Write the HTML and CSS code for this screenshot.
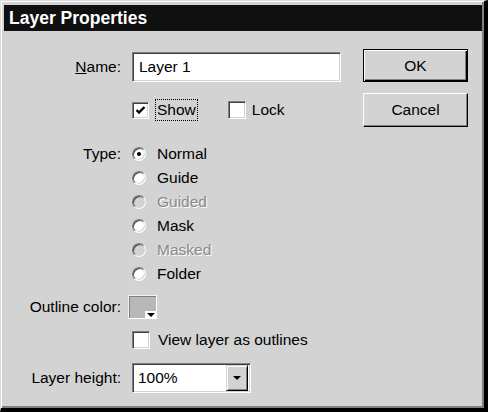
FILE: index.html
```html
<!doctype html>
<html lang="en">

<head>
  <meta charset="UTF-8">
  <title>Layer Properties</title>
  <link rel="stylesheet" href="styles.css">
</head>

<body>
  <div class="window">
    <header class="titlebar">Layer Properties</header>

    <main class="dialog_body">
      <section class="props">
        <div class="row row_name">
          <label class="row_label" for="layer_name"><u>N</u>ame:</label>
          <input id="layer_name" class="textbox" type="text" value="Layer 1">
        </div>

        <div class="row row_flags">
          <span class="row_label"></span>
          <span class="check">
            <span class="box">
              <svg viewBox="0 0 15 15" width="15" height="15"><polyline points="3.5,7 6,9.5 11.5,4" fill="none" stroke="#000" stroke-width="2.4"/></svg>
            </span>
            <span class="focus">Show</span>
          </span>
          <span class="check lock">
            <span class="box"></span>
            Lock
          </span>
        </div>

        <div class="row row_type">
          <span class="row_label">Type:</span>
          <ul class="radios">
            <li><span class="radio checked"></span>Normal</li>
            <li><span class="radio"></span>Guide</li>
            <li class="disabled"><span class="radio"></span>Guided</li>
            <li><span class="radio"></span>Mask</li>
            <li class="disabled"><span class="radio"></span>Masked</li>
            <li><span class="radio"></span>Folder</li>
          </ul>
        </div>

        <div class="row row_color">
          <span class="row_label">Outline color:</span>
          <span class="swatch"><span class="swatch_notch"></span></span>
        </div>

        <div class="row row_outline">
          <span class="row_label"></span>
          <span class="check">
            <span class="box"></span>
            View layer as outlines
          </span>
        </div>

        <div class="row row_height">
          <span class="row_label">Layer height:</span>
          <div class="select">
            <span class="select_value">100%</span>
            <span class="select_arrow"></span>
          </div>
        </div>
      </section>

      <section class="buttons">
        <button class="btn default">OK</button>
        <button class="btn">Cancel</button>
      </section>
    </main>
  </div>
</body>
</html>
```

FILE: styles.css
```css
* {
  box-sizing: border-box;
  margin: 0;
  padding: 0;
}

body {
  font-family: "Liberation Sans", Arial, sans-serif;
  font-size: 15.5px;
  color: #000;
  background: #d3d3d3;
}

.window {
  width: 488px;
  height: 412px;
  background: #d3d3d3;
  border-style: solid;
  border-width: 1px 4px 4px 1px;
  border-color: #dcdcdc #000 #000 #dcdcdc;
  box-shadow: inset 1px 1px #fff, inset -2px -2px #808080;
  padding: 4px 2px 2px 3px;
  display: flex;
  flex-direction: column;
}

.titlebar {
  height: 26px;
  background: #101010;
  color: #fff;
  font-weight: bold;
  font-size: 17.5px;
  line-height: 26px;
  padding-left: 5px;
}

.dialog_body {
  display: flex;
  flex: 1;
}

/* left column: labelled rows */
.props {
  padding-top: 21px;
}

.row {
  display: flex;
  align-items: center;
}

.row_label {
  width: 117px;
  margin-right: 11px;
  text-align: right;
  flex-shrink: 0;
}

.row_name {
  height: 30px;
}

.row_flags {
  height: 28px;
  margin-top: 14px;
}

.row_type {
  align-items: flex-start;
  margin-top: 18px;
}

.row_type .row_label {
  line-height: 24px;
}

.row_color {
  height: 24px;
  margin-top: 9px;
}

.row_outline {
  height: 28px;
  margin-top: 7px;
}

.row_height {
  height: 30px;
  margin-top: 9px;
}

/* sunken 3d edge shared by fields */
.textbox,
.box,
.select {
  border: 1px solid;
  border-color: #808080 #fff #fff #808080;
  box-shadow: inset 1px 1px #404040, inset -1px -1px #d3d3d3;
  background: #fff;
}

.textbox {
  width: 209px;
  height: 30px;
  padding: 0 6px;
  font: inherit;
  color: #000;
  outline: none;
}

.check {
  display: flex;
  align-items: center;
}

.check .box {
  width: 17px;
  height: 17px;
  margin-right: 6px;
  display: flex;
  align-items: center;
  justify-content: center;
}

.check .focus {
  border: 1px dotted #000;
  padding: 0 1px;
  line-height: 20px;
}

.check.lock {
  margin-left: 30px;
}

.check.lock .box {
  width: 18px;
  height: 18px;
}

.row_outline .check .box {
  width: 18px;
  height: 18px;
  margin-right: 8px;
}

/* radio list */
.radios {
  list-style: none;
}

.radios li {
  height: 24px;
  display: flex;
  align-items: center;
}

.radio {
  width: 14px;
  height: 14px;
  margin-right: 11px;
  border-radius: 50%;
  border: 1px solid;
  border-color: #808080 #fff #fff #808080;
  box-shadow: inset 1px 1px #404040, inset -1px -1px #d3d3d3;
  background: #fff;
  display: flex;
  align-items: center;
  justify-content: center;
}

.radio.checked::after {
  content: "";
  width: 4px;
  height: 4px;
  border-radius: 50%;
  background: #000;
}

.radios li.disabled {
  color: #8a8a8a;
  text-shadow: 1px 1px #fff;
}

.radios li.disabled .radio {
  background: #d3d3d3;
}

/* color chip */
.swatch {
  position: relative;
  width: 29px;
  height: 24px;
  margin-left: -4px;
  border: 1px solid;
  border-color: #f2f2f2 #fff #fff #f2f2f2;
  box-shadow: inset 1px 1px #808080;
  background: #b8b8b8;
}

.swatch_notch {
  position: absolute;
  right: 0;
  bottom: 0;
  width: 11px;
  height: 7px;
  background: #fff;
  display: flex;
  justify-content: center;
  align-items: center;
}

.swatch_notch::after {
  content: "";
  border-left: 4px solid transparent;
  border-right: 4px solid transparent;
  border-top: 4px solid #000;
}

/* drop down */
.select {
  width: 119px;
  height: 30px;
  display: flex;
  align-items: center;
  padding: 2px;
}

.select_value {
  flex: 1;
  padding-left: 3px;
}

.select_arrow {
  width: 22px;
  height: 26px;
  background: #d3d3d3;
  border: 1px solid;
  border-color: #d3d3d3 #000 #000 #d3d3d3;
  box-shadow: inset 1px 1px #fff, inset -1px -1px #808080;
  display: flex;
  align-items: center;
  justify-content: center;
}

.select_arrow::after {
  content: "";
  border-left: 4px solid transparent;
  border-right: 4px solid transparent;
  border-top: 4px solid #000;
}

/* right column */
.buttons {
  margin-left: auto;
  margin-right: 14px;
  padding-top: 18px;
  display: flex;
  flex-direction: column;
  gap: 11px;
}

.btn {
  width: 105px;
  height: 34px;
  font: inherit;
  color: #000;
  background: #d3d3d3;
  border: 1px solid;
  border-color: #fff #000 #000 #fff;
  box-shadow: inset -1px -1px #808080;
}

.btn.default {
  height: 33px;
  border-color: #000;
  box-shadow: inset 1px 1px #fff, inset -1px -1px #000, inset -2px -2px #808080;
}
```
